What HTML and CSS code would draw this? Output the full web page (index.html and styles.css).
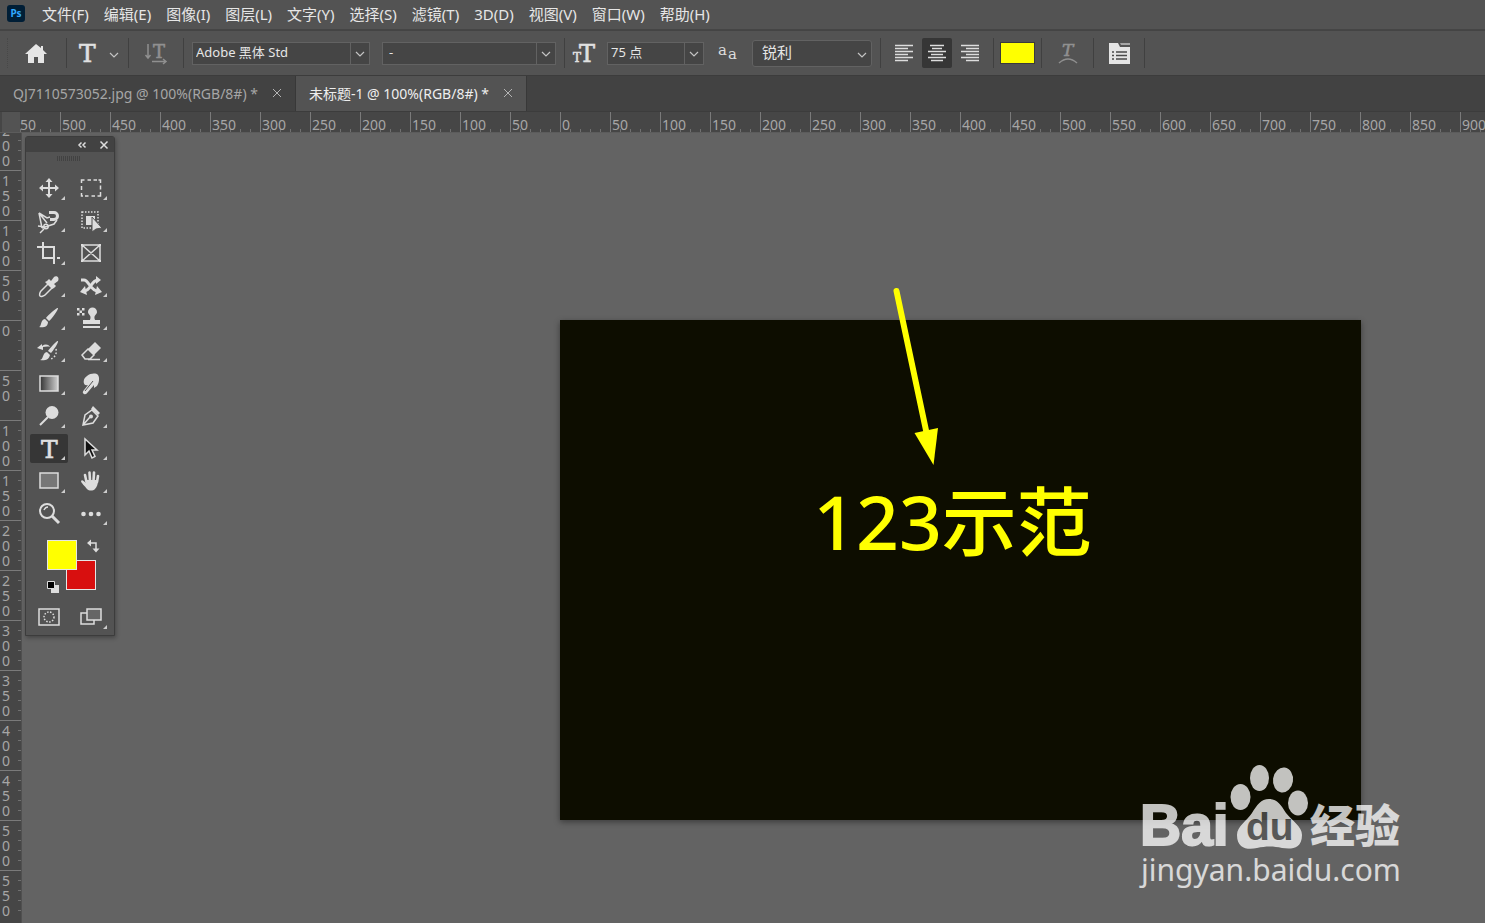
FILE: index.html
```html
<!DOCTYPE html>
<html lang="zh-CN">
<head>
    <meta charset="UTF-8">
    <meta name="viewport" content="width=device-width, initial-scale=1.0">
    <title>未标题-1</title>
    <link rel="stylesheet" href="styles.css">
</head>
<body>

<!-- 菜单栏 -->
<nav class="menu-bar">
    <span class="app-logo">Ps</span>
    <a href="#">文件(F)</a>
    <a href="#">编辑(E)</a>
    <a href="#">图像(I)</a>
    <a href="#">图层(L)</a>
    <a href="#">文字(Y)</a>
    <a href="#">选择(S)</a>
    <a href="#">滤镜(T)</a>
    <a href="#">3D(D)</a>
    <a href="#">视图(V)</a>
    <a href="#">窗口(W)</a>
    <a href="#">帮助(H)</a>
</nav>

<!-- 文字工具选项 -->
<div class="options-bar">
    <span class="grip"></span>
    <button class="opt home" aria-label="主页">
        <svg width="24" height="24" viewBox="0 0 24 24"><path d="M12 3L1 13h3v9h6v-6h4v6h6v-9h3l-4-4V5h-2v2z" fill="#e6e6e6"/></svg>
    </button>
    <span class="sep"></span>
    <button class="opt type" aria-label="文字工具">
        <svg width="44" height="24" viewBox="0 0 44 24"><text x="1" y="21" class="slab" font-size="25">T</text><path d="M32 12l4 4 4-4" class="thin"/></svg>
    </button>
    <span class="sep"></span>
    <button class="opt orient" aria-label="切换文本取向">
        <svg width="24" height="24" viewBox="0 0 24 24"><text x="9" y="17" class="slab dim" font-size="18">T</text><path d="M4 3v14M1.500 14L4 17l2.500-3M8 20.500h14M19 18l3 2.500-3 2.500" fill="none" stroke="#909090" stroke-width="1.500"/></svg>
    </button>
    <span class="sep"></span>
    <span class="combo font-family">
        <select aria-label="字体"><option>Adobe 黑体 Std</option></select>
        <svg width="18" height="20" viewBox="0 0 18 20"><path d="M5 9l4 4 4-4" class="thin"/></svg>
    </span>
    <span class="combo font-style">
        <select aria-label="字体样式"><option>-</option></select>
        <svg width="18" height="20" viewBox="0 0 18 20"><path d="M5 9l4 4 4-4" class="thin"/></svg>
    </span>
    <span class="sep"></span>
    <label class="opt size-label" for="fontSize">
        <svg width="24" height="24" viewBox="0 0 24 24"><text x="1" y="21" class="slab" font-size="12">T</text><text x="7" y="21" class="slab" font-size="24">T</text></svg>
    </label>
    <span class="combo font-size">
        <select id="fontSize" aria-label="字体大小"><option>75 点</option></select>
        <svg width="18" height="20" viewBox="0 0 18 20"><path d="M5 9l4 4 4-4" class="thin"/></svg>
    </span>
    <label class="opt aa-label" for="antiAlias">
        <svg width="24" height="24" viewBox="0 0 24 24"><text x="2" y="14" class="aa">a</text><text x="12" y="18" class="aa">a</text></svg>
    </label>
    <span class="combo anti-alias">
        <select id="antiAlias" aria-label="消除锯齿"><option>锐利</option></select>
        <svg width="18" height="20" viewBox="0 0 18 20"><path d="M5 10l4 4 4-4" class="thin"/></svg>
    </span>
    <span class="sep"></span>
    <div class="align-group">
        <button aria-label="左对齐"><svg width="20" height="20" viewBox="0 0 20 20"><path d="M1 2.500h18M1 5.500h13M1 8.500h18M1 11.500h13M1 14.500h18M1 17.500h13" class="line"/></svg></button>
        <button class="active" aria-label="居中对齐"><svg width="20" height="20" viewBox="0 0 20 20"><path d="M3 2.500h14M5 5.500h10M1 8.500h18M4 11.500h12M1 14.500h18M4 17.500h12" class="line"/></svg></button>
        <button aria-label="右对齐"><svg width="20" height="20" viewBox="0 0 20 20"><path d="M1 2.500h18M6 5.500h13M1 8.500h18M6 11.500h13M1 14.500h18M6 17.500h13" class="line"/></svg></button>
    </div>
    <span class="sep"></span>
    <button class="text-color" aria-label="文本颜色"></button>
    <span class="sep"></span>
    <button class="opt warp" aria-label="文字变形">
        <svg width="24" height="24" viewBox="0 0 24 24"><text x="6" y="15" class="slab dim" font-size="17" font-style="italic">T</text><path d="M3 22q9-8 18 0" fill="none" stroke="#909090" stroke-width="1.500"/></svg>
    </button>
    <span class="sep"></span>
    <button class="opt panels" aria-label="字符面板">
        <svg width="24" height="24" viewBox="0 0 24 24"><path d="M2 2h9l2 4h10v17H2z" fill="#e4e4e4"/><path d="M13 2h10v2H14z" fill="#a5a5a5"/><path d="M5 11h2m2 0h11M5 14.500h2m2 0h11M5 18h2m2 0h11" stroke="#4a4a4a" stroke-width="1.500"/></svg>
    </button>
    <span class="sep"></span>
</div>

<!-- 文档标签 -->
<div class="tab-bar">
    <div class="tab">
        <a href="#">QJ7110573052.jpg @ 100%(RGB/8#) *</a>
        <button aria-label="关闭"><svg width="10" height="10" viewBox="0 0 10 10"><path d="M1 1l8 8M9 1L1 9"/></svg></button>
    </div>
    <div class="tab current">
        <a href="#">未标题-1 @ 100%(RGB/8#) *</a>
        <button aria-label="关闭"><svg width="10" height="10" viewBox="0 0 10 10"><path d="M1 1l8 8M9 1L1 9"/></svg></button>
    </div>
</div>

<!-- 水平标尺 -->
<div class="ruler-row">
    <div class="ruler-corner"></div>
    <div class="ruler-h">
        <span>550</span><span>500</span><span>450</span><span>400</span><span>350</span><span>300</span><span>250</span><span>200</span><span>150</span><span>100</span><span>50</span>
        <span>0</span><span>50</span><span>100</span><span>150</span><span>200</span><span>250</span><span>300</span><span>350</span><span>400</span><span>450</span><span>500</span><span>550</span><span>600</span><span>650</span><span>700</span><span>750</span><span>800</span><span>850</span><span>900</span>
    </div>
</div>

<div class="main">
    <!-- 垂直标尺 -->
    <div class="ruler-v">
        <span>200</span><span>150</span><span>100</span><span>50</span><span>0</span><span>50</span><span>100</span><span>150</span><span>200</span><span>250</span><span>300</span><span>350</span><span>400</span><span>450</span><span>500</span><span>550</span>
    </div>

    <div class="workspace">
        <div class="document">
            <p class="sample-text">123示范</p>
        </div>

        <svg class="arrow" width="60" height="190" viewBox="0 0 60 190">
            <path d="M6.500 8L37 152" stroke="#ffff00" stroke-width="6" stroke-linecap="round"/>
            <path d="M24.500 150L48 145l-4.500 37z" fill="#ffff00"/>
        </svg>

        <!-- 浮动工具箱 -->
        <aside class="toolbox">
            <div class="toolbox-head">
                <button aria-label="折叠"><svg width="10" height="10" viewBox="0 0 10 10"><path d="M4.500 2.500L2 5l2.500 2.500M8.500 2.500L6 5l2.500 2.500"/></svg></button>
                <button aria-label="关闭工具箱"><svg width="10" height="10" viewBox="0 0 10 10"><path d="M1.500 1.500l7 7M8.500 1.500l-7 7"/></svg></button>
            </div>
            <div class="toolbox-grip"></div>
            <div class="tools">
                <button aria-label="移动工具"><svg viewBox="0 0 24 24"><path d="M12 4v16M4 12h16" class="st wide"/><path d="M12 2l3.500 4h-7zM12 22l3.500-4h-7zM2 12l4-3.500v7zM22 12l-4-3.500v7z" class="fl"/></svg></button>
                <button aria-label="矩形选框工具"><svg viewBox="0 0 24 24"><path d="M2.500 7V4h3M8.500 4H12M14.500 4H18M19.500 4h2v3M21.500 9.500v4M21.500 16v4h-3M16 20h-3.500M9.500 20H6M4 20H2.500v-3M2.500 14v-4" class="st"/></svg></button>
                <button aria-label="磁性套索工具"><svg viewBox="0 0 24 24"><path d="M10 14L2 4l3 15M2 4l8 5 3-1M5 19l12-4 3-4M1 17l7 1" class="st"/><circle cx="9" cy="17.500" r="2.200" class="st"/><path d="M7 20l-4 4" class="st"/><path d="M12 3.500h5a3.500 3.500 0 0 1 0 7h-4" class="thick"/></svg></button>
                <button aria-label="对象选择工具"><svg viewBox="0 0 24 24"><path d="M3 3h16v16H3z" class="st" stroke-dasharray="1.500 1.500"/><path d="M7 7h9v9H7z" class="fl"/><path d="M13 8v15l4-3 6-1z" class="cursor"/></svg></button>
                <button aria-label="裁剪工具"><svg viewBox="0 0 24 24"><path d="M6 1v16h11M0 6h17v17M20 17h3" class="st wide"/></svg></button>
                <button aria-label="图框工具" class="plain"><svg viewBox="0 0 24 24"><path d="M3 4h18v16H3zM3 4l18 16M21 4L3 20" class="st"/><path d="M2 3h2v2H2zM20 3h2v2h-2zM2 19h2v2H2zM20 19h2v2h-2z" class="fl"/></svg></button>
                <button aria-label="吸管工具"><svg viewBox="0 0 24 24"><path d="M12 9L4 17c-1 1-2 4-1 5s4 0 5-1l8-8" class="st"/><path d="M10 7l2-2 2 2 3-4c2-2 6 0 4 4l-4 3 2 2-2 2-2 1-7-7z" class="fl"/></svg></button>
                <button aria-label="内容感知移动工具"><svg viewBox="0 0 24 24"><path d="M2 6h3c5 0 6 11 14 11M5 17c7 0 7-11 14-11" class="thick"/><path d="M17 2l5 4-5 4zM6 12l-5 6 7 3zM18 12l5 6-7 3z" class="fl"/></svg></button>
                <button aria-label="画笔工具"><svg viewBox="0 0 24 24"><path d="M21 2c1 1-7 12-9 13l-3-3C11 9 20 1 21 2zM8 13l3 3c0 5-5 6-9 5 3-1 1-7 6-8z" class="fl"/></svg></button>
                <button aria-label="图案图章工具"><svg viewBox="0 0 24 24"><path d="M11 14c2-5-2-5-2-8a4.500 4.500 0 0 1 9 0c0 3-4 3-2 8h5v4H4v-4zM4 20h17v2H4zM-2 2h2.500v2.500H-2zM3 2h2.500v2.500H3zM.5 4.500H3V7H.5zM-2 7H.5v2.500H-2zM3 7h2.500v2.500H3z" class="fl"/></svg></button>
                <button aria-label="历史记录画笔工具"><svg viewBox="0 0 24 24"><path d="M21 2c1 1-5 10-7 12l-3-2C13 9 20 1 21 2zM10 13l3 3c-1 5-6 6-10 5 4-1 2-7 7-8zM0 9l5-4v2c3-2 6-2 8 1-3-1-5 0-7 0v3z" class="fl"/><path d="M19 10c1 5-1 8-5 10" class="st" stroke-dasharray="1.500 2"/></svg></button>
                <button aria-label="橡皮擦工具"><svg viewBox="0 0 24 24"><path d="M3 16l6-6 6 6-4 4H6zM9 20.500h12" class="st"/><path d="M9 10l7-7 6 6-7 7z" class="fl"/></svg></button>
                <button aria-label="渐变工具"><svg viewBox="0 0 24 24"><defs><linearGradient id="grad"><stop offset="0" stop-color="#333"/><stop offset="1" stop-color="#d0d0d0"/></linearGradient></defs><path d="M3 4h18v15H3z" fill="url(#grad)" stroke="#ddd" stroke-width="1.500"/></svg></button>
                <button aria-label="涂抹工具"><svg viewBox="0 0 24 24"><path d="M8 4c4-3 9-3 11-1 2 3 1 8-1 11l-3 2v-3l-6 7c-1 1-2 3-4 2s-1-3 0-4l4-5c-5 2-6-6-1-9z" class="fl"/><path d="M14 9l-8 10" stroke="#535353" stroke-width="1"/></svg></button>
                <button aria-label="减淡工具"><svg viewBox="0 0 24 24"><circle cx="15" cy="8.500" r="6.500" class="fl"/><path d="M11 13l-8 8" class="st wide"/></svg></button>
                <button aria-label="钢笔工具"><svg viewBox="0 0 24 24"><path d="M4 21l2-10 7-5 6 6-5 7zM4 21l7-8" class="st"/><circle cx="12" cy="12.500" r="2" class="fl"/><path d="M14 2l7 7-2 2-7-6z" class="fl"/></svg></button>
                <button aria-label="横排文字工具" class="active"><svg viewBox="0 0 24 24"><text x="4" y="21" class="slab" font-size="25">T</text></svg></button>
                <button aria-label="路径选择工具"><svg viewBox="0 0 24 24"><path d="M6 2v16l4-4 3 7 3-1.500-3-6.500h5z" fill="#111" stroke="#ddd" stroke-width="1.500"/></svg></button>
                <button aria-label="矩形工具"><svg viewBox="0 0 24 24"><path d="M3 4h18v15H3z" fill="#777" stroke="#ddd" stroke-width="1.500"/></svg></button>
                <button aria-label="抓手工具"><svg viewBox="0 0 24 24"><path d="M7.500 13L6 6M11 12l-.5-8.500M14.500 12l.5-8.500M18 13l1-6" class="finger"/><path d="M7 11h12c0 4-1 7-3 9-2 2-6 2-8 0-2-3-6-6-6-8 1-2 3 0 5 2z" class="fl"/></svg></button>
                <button aria-label="缩放工具" class="plain"><svg viewBox="0 0 24 24"><circle cx="10" cy="9" r="7" class="st wide"/><path d="M7 8c1-2 2-3 4-3" class="st"/><path d="M15 14l7 7" class="thick"/></svg></button>
                <button aria-label="编辑工具栏"><svg viewBox="0 0 24 24"><circle cx="4.500" cy="12" r="2.300" class="fl"/><circle cx="12" cy="12" r="2.300" class="fl"/><circle cx="19.500" cy="12" r="2.300" class="fl"/></svg></button>
            </div>
            <div class="colors">
                <button class="bg-color" aria-label="背景色"></button>
                <button class="fg-color" aria-label="前景色"></button>
                <button class="swap" aria-label="切换前景色和背景色"><svg width="14" height="14" viewBox="0 0 14 14"><path d="M3 4h7v7" class="st"/><path d="M1 4l4-3.500v7zM10 13.500L6.500 9.500h7z" class="fl"/></svg></button>
                <button class="reset" aria-label="默认颜色"><svg width="14" height="14" viewBox="0 0 14 14"><path d="M5 5h8v8H5z" class="fl"/><path d="M1.500 1.500h7v7h-7z" fill="#000" stroke="#ddd"/></svg></button>
            </div>
            <div class="tools modes">
                <button aria-label="快速蒙版" class="plain"><svg viewBox="0 0 24 24"><path d="M2 4h20v16H2z" class="st"/><circle cx="12" cy="12" r="5" class="st" stroke-dasharray="1.500 1.500"/></svg></button>
                <button aria-label="屏幕模式"><svg viewBox="0 0 24 24"><path d="M8 8H2v11h13v-4" class="st"/><path d="M8 4h14v11H8z" class="st frame"/></svg></button>
            </div>
        </aside>

        <!-- 水印 -->
        <svg class="watermark" width="280" height="135" viewBox="0 0 280 135" role="img" aria-label="百度经验">
            <ellipse cx="105.500" cy="37" rx="10" ry="13"/>
            <ellipse cx="124.500" cy="18" rx="9.500" ry="13"/>
            <ellipse cx="148" cy="20" rx="10" ry="12.500" transform="rotate(8 148 20)"/>
            <ellipse cx="163" cy="43" rx="10" ry="12.500"/>
            <path d="M134 39c8 0 12 6 17 14 6 8 16 13 16 22 0 15-12 14-20 13-9-2-16-2-25 0-9 2-20 1-20-13 0-9 10-14 15-22 5-8 9-14 17-14z"/>
            <text x="5" y="85" class="wm-bai">Bai</text>
            <text x="111" y="80" class="wm-du">du</text>
            <text x="175" y="83" class="wm-cn">经验</text>
            <text x="6" y="121" class="wm-url">jingyan.baidu.com</text>
        </svg>
    </div>
</div>

</body>
</html>
```
FILE: styles.css
```css
* {
    box-sizing: border-box;
}
body {
    margin: 0;
    height: 100vh;
    display: flex;
    flex-direction: column;
    overflow: hidden;
    background-color: #636363;
    color: #e6e6e6;
    font-family: "Noto Sans", "Noto Sans CJK SC", sans-serif;
    font-size: 15px;
}
a {
    color: inherit;
    text-decoration: none;
}
button {
    padding: 0;
    border: none;
    background: none;
    display: flex;
    align-items: center;
    justify-content: center;
    cursor: pointer;
}

/* 图标通用样式 */
svg {
    display: block;
    overflow: visible;
}
.st {
    fill: none;
    stroke: #ddd;
    stroke-width: 1.5;
}
.wide {
    stroke-width: 2;
}
.thick {
    fill: none;
    stroke: #ddd;
    stroke-width: 3;
}
.finger {
    fill: none;
    stroke: #ddd;
    stroke-width: 2.6;
    stroke-linecap: round;
}
.fl {
    fill: #ddd;
}
.frame {
    fill: #666;
}
.cursor {
    fill: #ddd;
    stroke: #535353;
}
.thin {
    fill: none;
    stroke: #c4c4c4;
    stroke-width: 1.2;
}
.line {
    stroke: #ddd;
    stroke-width: 1.5;
}
.slab {
    font-family: "DejaVu Serif", serif;
    fill: #e0e0e0;
    stroke: #e0e0e0;
    stroke-width: 0.6;
}
.dim {
    fill: #909090;
    stroke: #909090;
}
.aa {
    font-family: "DejaVu Serif", serif;
    font-size: 15px;
    fill: #ddd;
}

/* 菜单栏 */
.menu-bar {
    display: flex;
    align-items: center;
    gap: 15px;
    flex: none;
    height: 30px;
    padding: 0 0 2px 7px;
    background-color: #535353;
    border-bottom: 1px solid #454545;
    white-space: nowrap;
}
.app-logo {
    width: 18px;
    height: 17px;
    margin-right: 2px;
    border-radius: 3px;
    background-color: #001e36;
    color: #31a8ff;
    font-size: 10px;
    font-weight: bold;
    line-height: 16px;
    text-align: center;
}

/* 选项栏 */
.options-bar {
    display: flex;
    align-items: center;
    flex: none;
    height: 46px;
    background-color: #535353;
    border-top: 1px solid #444;
    border-bottom: 1px solid #3c3c3c;
}
.grip {
    width: 8px;
    height: 30px;
    border-right: 1px dotted #484848;
}
.sep {
    width: 1px;
    height: 30px;
    margin: 0 2px;
    background-color: #404040;
}
.opt {
    display: flex;
    justify-content: center;
}
.home {
    width: 56px;
}
.type {
    width: 57px;
    justify-content: flex-end;
    padding-right: 4px;
}
.orient {
    width: 50px;
}
.size-label {
    width: 34px;
}
.aa-label {
    width: 36px;
}
.warp {
    width: 47px;
}
.panels {
    width: 46px;
}
.combo {
    display: flex;
    align-items: center;
    height: 23px;
    margin: 0 6px;
    background-color: #454545;
    border: 1px solid #626262;
}
.combo select {
    flex: 1;
    min-width: 0;
    height: 100%;
    padding: 0 3px 2px;
    border: none;
    border-right: 1px solid #626262;
    background: none;
    color: #e6e6e6;
    font-family: inherit;
    font-size: 13px;
    appearance: none;
}
.font-family {
    width: 178px;
}
.font-style {
    width: 174px;
}
.font-style select {
    padding-left: 6px;
}
.font-size {
    width: 97px;
}
.anti-alias {
    width: 120px;
    height: 27px;
    border-radius: 3px;
}
.anti-alias select {
    padding-left: 9px;
    border-right: none;
    font-size: 15px;
}
.align-group {
    display: flex;
    gap: 3px;
    margin: 0 6px;
}
.align-group button {
    width: 30px;
    height: 30px;
}
.align-group .active {
    background-color: #363636;
    border-radius: 2px;
}
.text-color {
    width: 35px;
    height: 22px;
    margin: 0 4px;
    background-color: #ffff00;
    border: 1px solid #3a3a3a;
}

/* 文档标签 */
.tab-bar {
    display: flex;
    flex: none;
    height: 36px;
    background-color: #424242;
    border-bottom: 1px solid #3c3c3c;
    white-space: nowrap;
}
.tab {
    display: flex;
    align-items: center;
    gap: 14px;
    padding: 0 13px 1px;
    color: #a6a6a6;
    font-size: 14px;
    border-right: 1px solid #383838;
}
.tab svg {
    fill: none;
    stroke: #b4b4b4;
}
.current {
    background-color: #535353;
    color: #eee;
}

/* 标尺 */
.ruler-row {
    display: flex;
    flex: none;
    height: 21px;
    background-color: #464646;
    border-bottom: 1px solid #5c5c5c;
}
.ruler-corner {
    flex: none;
    width: 20px;
    background-color: #535353;
    border-left: 2px solid #464646;
}
.ruler-h {
    flex: 1;
    display: flex;
    overflow: hidden;
    color: #a6a6a6;
    font-size: 14px;
    line-height: 26px;
}
.ruler-h span {
    flex: none;
    width: 50px;
    height: 20px;
    padding-left: 1px;
    border-left: 1px solid #7a7a7a;
    background: repeating-linear-gradient(to right, transparent 0 9px, #707070 9px 10px) 0 100% / 100% 3px no-repeat;
}
.ruler-h span:first-child {
    margin-left: -10px;
}
.main {
    flex: 1;
    display: flex;
    min-height: 0;
}
.ruler-v {
    flex: none;
    width: 22px;
    overflow: hidden;
    background-color: #464646;
    border-right: 1px solid #505050;
    color: #a6a6a6;
    font-size: 14px;
    line-height: 15px;
}
.ruler-v span {
    display: block;
    height: 50px;
    padding: 2px 10px 0 2px;
    border-top: 1px solid #7a7a7a;
    word-break: break-all;
    background: repeating-linear-gradient(to bottom, transparent 0 9px, #707070 9px 10px) 100% 0 / 3px 100% no-repeat;
}
.ruler-v span:first-child {
    margin-top: -13px;
}

/* 工作区 */
.workspace {
    flex: 1;
    position: relative;
    overflow: hidden;
    background-color: #636363;
}
.document {
    position: absolute;
    left: 538px;
    top: 187px;
    width: 801px;
    height: 500px;
    background-color: #0d0d00;
    box-shadow: 0 2px 6px rgba(0, 0, 0, 0.4);
}
.sample-text {
    margin: 0;
    padding: 146px 16px 0 0;
    color: #ffff00;
    font-family: "Noto Sans", "Noto Sans CJK SC", sans-serif;
    font-size: 75px;
    font-weight: 500;
    line-height: 110px;
    text-align: center;
}
.arrow {
    position: absolute;
    left: 868px;
    top: 150px;
}

/* 工具箱 */
.toolbox {
    position: absolute;
    left: 3px;
    top: 3px;
    width: 90px;
    background-color: #535353;
    border: 1px solid #3c3c3c;
    border-radius: 3px 3px 0 0;
    box-shadow: 1px 2px 4px rgba(0, 0, 0, 0.3);
}
.toolbox-head {
    display: flex;
    justify-content: flex-end;
    gap: 12px;
    height: 15px;
    padding-right: 5px;
    background-color: #424242;
}
.toolbox-head svg {
    fill: none;
    stroke: #ddd;
    stroke-width: 1.5;
}
.toolbox-grip {
    width: 24px;
    height: 5px;
    margin: 4px auto 11px 31px;
    background: repeating-linear-gradient(to right, #424242 0 1px, transparent 1px 2px);
}
.tools {
    display: grid;
    grid-template-columns: 38px 38px;
    grid-auto-rows: 1fr;
    gap: 0 4px;
    height: 358px;
    padding-left: 4px;
}
.tools button {
    position: relative;
    height: 29px;
    align-self: center;
}
.tools svg {
    width: 24px;
    height: 24px;
}
/* 右下角的子菜单标记 */
.tools button::after {
    content: "";
    position: absolute;
    right: 3px;
    bottom: 3px;
    border-left: 4px solid transparent;
    border-bottom: 4px solid #ccc;
}
.tools .plain::after {
    display: none;
}
.tools .active {
    background-color: #363636;
    border-radius: 2px;
}
.colors {
    position: relative;
    height: 71px;
}
.colors button {
    position: absolute;
}
.colors .fg-color, .colors .bg-color {
    width: 30px;
    height: 30px;
    border: 1px solid #e6e6e6;
}
.fg-color {
    left: 21px;
    top: 10px;
    background-color: #ffff00;
}
.bg-color {
    left: 40px;
    top: 30px;
    background-color: #d80f0f;
}
.swap {
    left: 60px;
    top: 9px;
}
.reset {
    left: 20px;
    top: 50px;
}
.modes {
    height: 34px;
    padding-bottom: 2px;
}

/* 水印 */
.watermark {
    position: absolute;
    left: 1113px;
    top: 627px;
    fill: #fff;
    opacity: 0.75;
}
.wm-bai {
    font-family: "Liberation Sans", sans-serif;
    font-size: 57px;
    font-weight: bold;
    stroke: #fff;
    stroke-width: 2;
}
.wm-du {
    font-family: "Liberation Sans", sans-serif;
    font-size: 39px;
    font-weight: bold;
    fill: #555;
}
.wm-cn {
    font-family: "Noto Sans CJK SC", sans-serif;
    font-size: 45px;
    font-weight: 900;
}
.wm-url {
    font-family: "Noto Sans", sans-serif;
    font-size: 30px;
    font-weight: 400;
}
```
